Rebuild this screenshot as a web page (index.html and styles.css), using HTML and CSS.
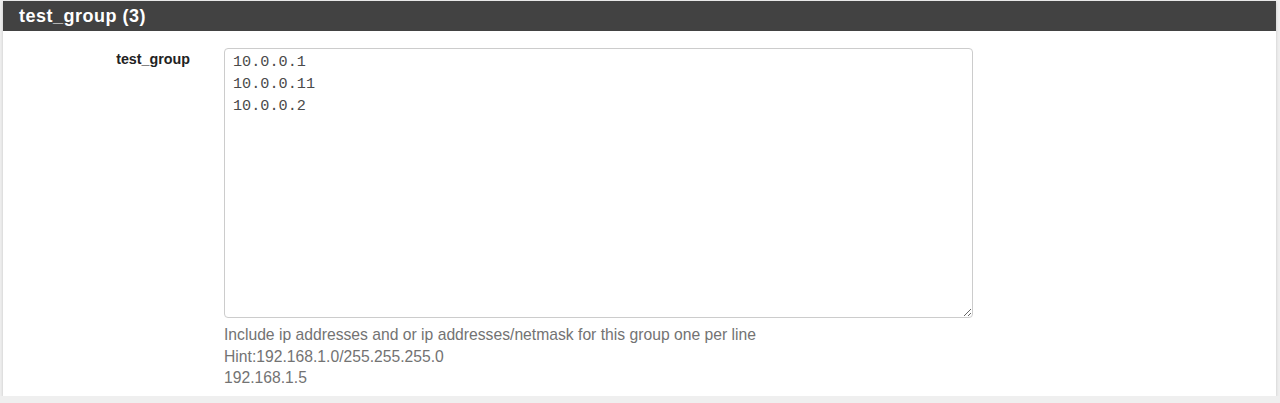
FILE: index.html
```html
<!DOCTYPE html>
<html>
<head>
<meta charset="utf-8">
<link rel="stylesheet" href="styles.css">
</head>
<body>
<div class="page">
  <div class="panel">
    <div class="panel-heading"><h2 class="panel-title">test_group (3)</h2></div>
    <div class="panel-body">
      <div class="form-group">
        <label class="control-label" for="grp">test_group</label>
        <div class="field">
          <textarea id="grp" class="form-control">10.0.0.1
10.0.0.11
10.0.0.2</textarea>
          <div class="help-block">Include ip addresses and or ip addresses/netmask for this group one per line<br>Hint:192.168.1.0/255.255.255.0<br>192.168.1.5</div>
        </div>
      </div>
    </div>
  </div>
</div>
</body>
</html>
```

FILE: styles.css
```css
html, body {
  margin: 0;
  padding: 0;
  background: #efefef;
  font-family: "Liberation Sans", Arial, sans-serif;
}
.page {
  padding: 1px 4px 0 3px;
}
.panel {
  background: #ffffff;
  box-shadow: 0 1px 3px rgba(0,0,0,0.18);
}
.panel-heading {
  background: #424242;
  height: 30px;
  padding: 0 16px;
  display: flex;
  align-items: center;
}
.panel-title {
  margin: 0;
  color: #ffffff;
  font-size: 18px;
  font-weight: bold;
  letter-spacing: 0.5px;
}
.panel-body {
  padding: 17px 0 7px 0;
}
.form-group {
  display: grid;
  grid-template-columns: 187px 749px;
  column-gap: 34px;
}
.control-label {
  text-align: right;
  font-size: 14.3px;
  font-weight: bold;
  color: #222222;
  padding-top: 1px;
  line-height: 20px;
}
.form-control {
  display: block;
  box-sizing: border-box;
  width: 749px;
  height: 270px;
  margin: 0;
  padding: 2px 8px;
  border: 1px solid #cccccc;
  border-radius: 4px;
  font-family: "Liberation Mono", "Courier New", monospace;
  font-size: 15.2px;
  line-height: 22px;
  color: #4a4a4a;
  background: #ffffff;
  resize: both;
  outline: none;
}
.help-block {
  margin-top: 6px;
  font-size: 15.7px;
  line-height: 21.5px;
  color: #737373;
}
```
